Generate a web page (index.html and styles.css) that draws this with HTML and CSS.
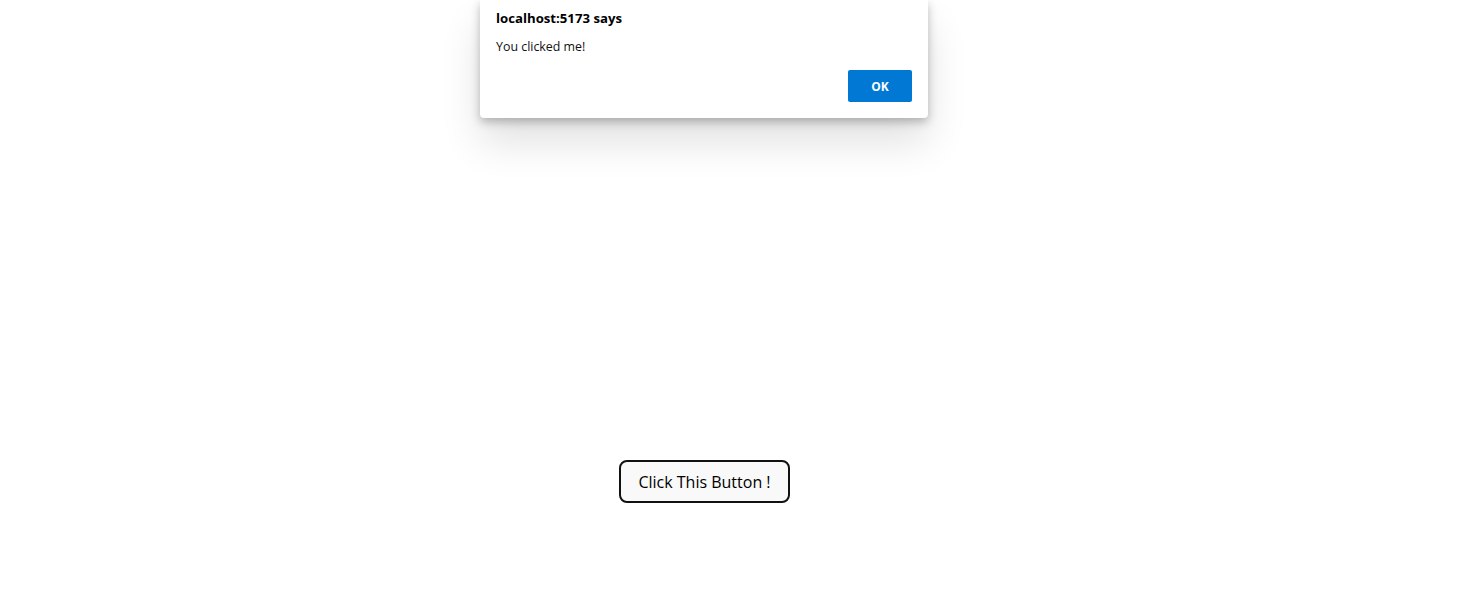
FILE: index.html
```html
<!DOCTYPE html>
<html>
<head>
<meta charset="utf-8">
<link rel="stylesheet" href="styles.css">
</head>
<body>
<main class="page">
  <button class="cta">Click This Button !</button>
</main>
<div class="dialog">
  <div class="dialog-title">localhost:5173 says</div>
  <div class="dialog-msg">You clicked me!</div>
  <div class="dialog-actions">
    <button class="ok">OK</button>
  </div>
</div>
</body>
</html>
```
FILE: styles.css
```css
html, body {
  margin: 0;
  padding: 0;
  background: #ffffff;
  font-family: "Open Sans", "Noto Sans", sans-serif;
}
.page {
  width: 1409px;
  height: 592px;
  display: flex;
  justify-content: center;
  align-items: flex-start;
  padding-top: 460px;
  box-sizing: border-box;
}
.cta {
  width: 171px;
  height: 43px;
  box-sizing: border-box;
  border: 2px solid #111111;
  border-radius: 8px;
  background: #f9f9f9;
  color: #000000;
  font-family: "Open Sans", sans-serif;
  font-size: 16px;
  font-weight: 500;
  padding: 0;
  cursor: pointer;
}
.dialog {
  position: absolute;
  left: 480px;
  top: 0;
  width: 448px;
  height: 118px;
  box-sizing: border-box;
  background: #ffffff;
  border-radius: 0 0 4px 4px;
  box-shadow: 0 24px 40px rgba(0,0,0,0.12), 0 4px 10px rgba(0,0,0,0.25);
  padding: 9px 16px 0 16px;
}
.dialog-title {
  font-size: 13.2px;
  font-weight: 700;
  color: #000;
  line-height: 18px;
}
.dialog-msg {
  font-size: 12.4px;
  color: #111;
  line-height: 18px;
  margin-top: 11px;
}
.dialog-actions {
  display: flex;
  justify-content: flex-end;
  margin-top: 14px;
}
.ok {
  width: 64px;
  height: 32px;
  border: none;
  border-radius: 2px;
  background: #0078d4;
  color: #fff;
  font-family: "Open Sans", sans-serif;
  font-weight: 700;
  font-size: 12px;
  padding: 0;
}
```
